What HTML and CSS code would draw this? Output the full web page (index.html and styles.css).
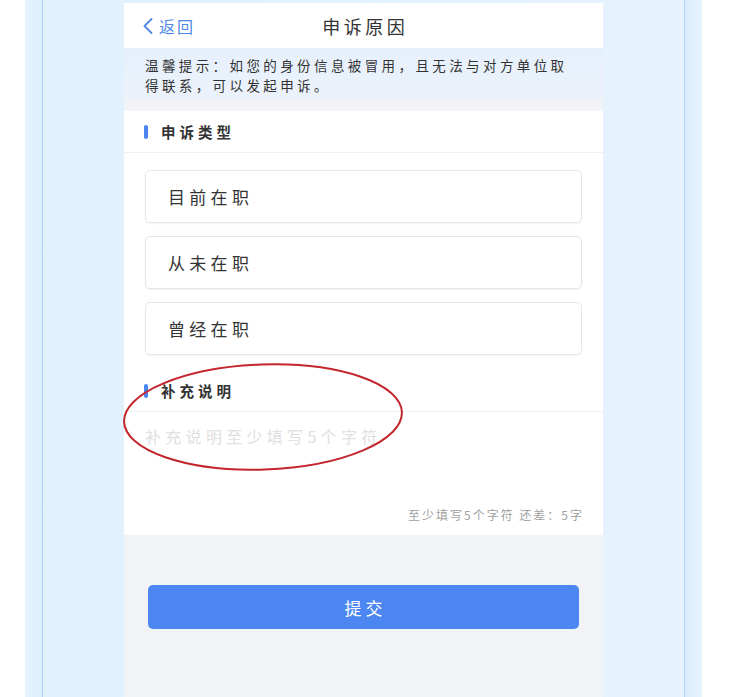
FILE: index.html
```html
<!DOCTYPE html>
<html lang="zh-CN">
<head>
<meta charset="utf-8">
<title>申诉原因</title>
<link rel="stylesheet" href="styles.css">
</head>
<body>
<div class="frame">
  <div class="rail rail-left"></div>
  <div class="stage">
    <div class="phone">
      <div class="header">
        <div class="back">
          <svg class="chev" width="12" height="16" viewBox="0 0 12 16"><polyline points="9.5,1 2.5,8 9.5,15" fill="none" stroke="#4f89e6" stroke-width="1.8" stroke-linecap="round" stroke-linejoin="round"/></svg>
          <span class="back-text">返回</span>
        </div>
        <div class="title">申诉原因</div>
        <div></div>
      </div>
      <div class="tip">温馨提示：如您的身份信息被冒用，且无法与对方单位取得联系，可以发起申诉。</div>
      <div class="card">
        <div class="sec-head"><span class="bar"></span><span class="sec-title">申诉类型</span></div>
        <div class="options">
          <div class="opt">目前在职</div>
          <div class="opt">从未在职</div>
          <div class="opt">曾经在职</div>
        </div>
        <div class="sec-head sec-head-2"><span class="bar"></span><span class="sec-title">补充说明</span></div>
        <div class="note">
          <div class="placeholder">补充说明至少填写5个字符</div>
          <div class="counter">至少填写5个字符 还差：5字</div>
        </div>
      </div>
      <div class="submit">提交</div>
      <svg class="mark" width="284" height="112" viewBox="0 0 284 112"><ellipse cx="142" cy="56" rx="139" ry="52.5" fill="none" stroke="#c4262d" stroke-width="2" transform="rotate(-2 142 56)"/></svg>
    </div>
  </div>
  <div class="rail rail-right"></div>
</div>
</body>
</html>
```

FILE: styles.css
```css
* { box-sizing: border-box; }

body {
  margin: 0;
  background: #ffffff;
  font-family: "Noto Sans CJK SC", "Noto Sans", sans-serif;
  color: #333333;
}

.frame {
  margin-left: 25px;
  width: 677px;
  height: 697px;
  display: flex;
  background: #e4f2fe;
  overflow: hidden;
}

.rail {
  width: 18px;
  background: linear-gradient(90deg, #e6f3ff, #ddeefd);
}

.rail-left { border-right: 1px solid #abd4f8; }
.rail-right {
  border-left: 1px solid #abd4f8;
  background: linear-gradient(90deg, #d9ecfd, #e8f4ff);
}

.stage {
  flex: 1;
  padding: 3px 81px 0;
  background: linear-gradient(90deg, #e2f1fe, #e6f3fe);
}

.phone {
  position: relative;
  height: 694px;
  background: #f2f3f7;
}

.header {
  height: 45px;
  background: #ffffff;
  display: grid;
  grid-template-columns: 1fr auto 1fr;
  align-items: center;
}

.back {
  display: flex;
  align-items: center;
  padding-left: 18px;
  color: #4f89e6;
}

.chev { display: block; margin-right: 5px; }

.back-text {
  font-size: 16px;
  letter-spacing: 2px;
}

.title {
  font-size: 18px;
  letter-spacing: 3.5px;
  padding-left: 3.5px;
  color: #333333;
}

.tip {
  height: 52px;
  padding: 7px 26px 0 21px;
  font-size: 13.5px;
  line-height: 20px;
  letter-spacing: 3.4px;
  color: #333333;
  background: linear-gradient(180deg, #e6f0fc, #ecf2fb);
}

.card {
  margin-top: 11px;
  height: 424px;
  background: #ffffff;
  display: flex;
  flex-direction: column;
}

.sec-head {
  height: 42px;
  display: flex;
  align-items: center;
  padding-left: 20px;
  border-bottom: 1px solid #f1f1f3;
}

.sec-head-2 { margin-top: 15px; }

.bar {
  width: 4px;
  height: 14px;
  border-radius: 2px;
  background: #4a86f0;
  margin-right: 13px;
}

.sec-title {
  font-size: 14.5px;
  font-weight: bold;
  letter-spacing: 4px;
  color: #333333;
}

.options {
  padding: 17px 21px 0;
  display: flex;
  flex-direction: column;
  gap: 13px;
}

.opt {
  height: 53px;
  border: 1px solid #e6e6e6;
  border-radius: 5px;
  box-shadow: 0 1px 2px rgba(0, 0, 0, 0.05);
  display: flex;
  align-items: center;
  padding-left: 22px;
  font-size: 17px;
  letter-spacing: 4.3px;
  color: #333333;
}

.note {
  flex: 1;
  display: flex;
  flex-direction: column;
  justify-content: space-between;
  padding: 12px 19px 11px 21px;
}

.placeholder {
  font-size: 16px;
  line-height: 24px;
  letter-spacing: 4.3px;
  color: #e0e0e0;
}

.counter {
  align-self: flex-end;
  font-size: 12px;
  line-height: 18px;
  letter-spacing: 2px;
  color: #9f9f9f;
}

.submit {
  margin: 50px 24px 0;
  height: 44px;
  border-radius: 5px;
  background: #4b86f1;
  color: #ffffff;
  display: flex;
  align-items: center;
  justify-content: center;
  font-size: 17px;
  letter-spacing: 4px;
  padding-left: 4px;
}

.mark {
  position: absolute;
  left: -3px;
  top: 358px;
}
```
